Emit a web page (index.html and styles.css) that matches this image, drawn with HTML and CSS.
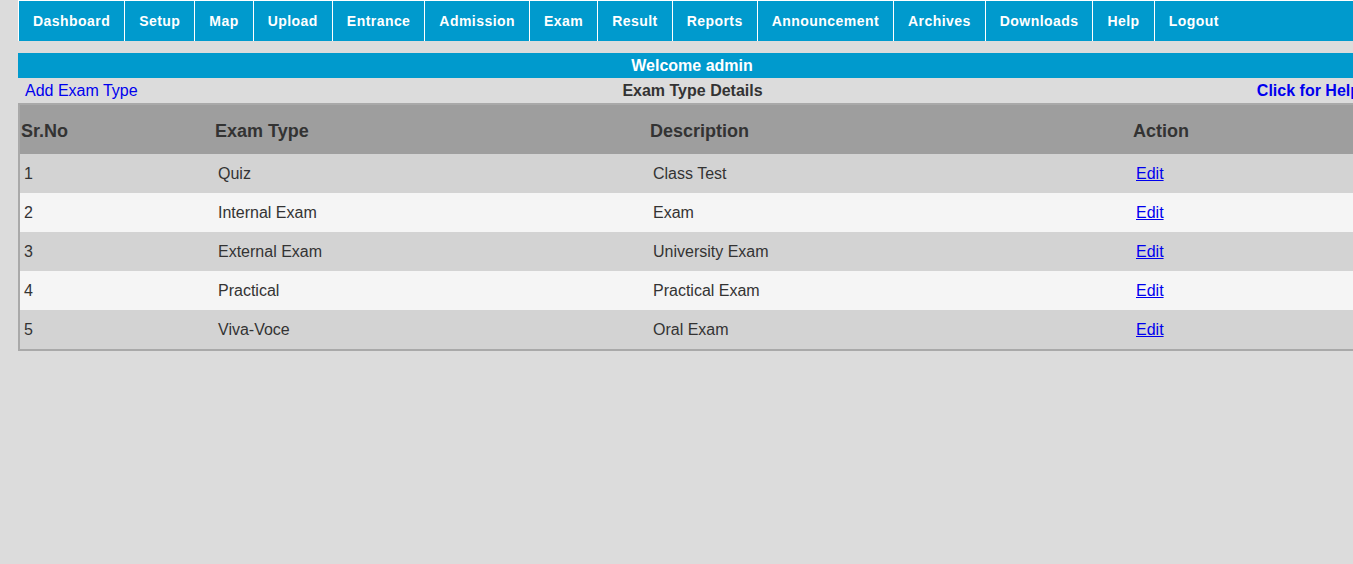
FILE: index.html
```html
<!DOCTYPE html>
<html>
<head>
<meta charset="utf-8">
<title>Exam Type Details</title>
<link rel="stylesheet" href="styles.css">
</head>
<body>
<div class="page">
  <ul class="nav">
    <li><a href="#">Dashboard</a></li>
    <li><a href="#">Setup</a></li>
    <li><a href="#">Map</a></li>
    <li><a href="#">Upload</a></li>
    <li><a href="#">Entrance</a></li>
    <li><a href="#">Admission</a></li>
    <li><a href="#">Exam</a></li>
    <li><a href="#">Result</a></li>
    <li><a href="#">Reports</a></li>
    <li><a href="#">Announcement</a></li>
    <li><a href="#">Archives</a></li>
    <li><a href="#">Downloads</a></li>
    <li><a href="#">Help</a></li>
    <li><a href="#">Logout</a></li>
  </ul>

  <div class="welcome">Welcome admin</div>

  <div class="subbar">
    <a class="add-link" href="#">Add Exam Type</a>
    <span class="title">Exam Type Details</span>
    <a class="help-link" href="#">Click for Help</a>
  </div>

  <div class="grid">
    <div class="row head">
      <div class="cell">Sr.No</div>
      <div class="cell">Exam Type</div>
      <div class="cell">Description</div>
      <div class="cell">Action</div>
    </div>
    <div class="row odd">
      <div class="cell">1</div>
      <div class="cell">Quiz</div>
      <div class="cell">Class Test</div>
      <div class="cell"><a href="#">Edit</a></div>
    </div>
    <div class="row even">
      <div class="cell">2</div>
      <div class="cell">Internal Exam</div>
      <div class="cell">Exam</div>
      <div class="cell"><a href="#">Edit</a></div>
    </div>
    <div class="row odd">
      <div class="cell">3</div>
      <div class="cell">External Exam</div>
      <div class="cell">University Exam</div>
      <div class="cell"><a href="#">Edit</a></div>
    </div>
    <div class="row even">
      <div class="cell">4</div>
      <div class="cell">Practical</div>
      <div class="cell">Practical Exam</div>
      <div class="cell"><a href="#">Edit</a></div>
    </div>
    <div class="row odd">
      <div class="cell">5</div>
      <div class="cell">Viva-Voce</div>
      <div class="cell">Oral Exam</div>
      <div class="cell"><a href="#">Edit</a></div>
    </div>
  </div>
</div>
</body>
</html>
```
FILE: styles.css
```css
html, body {
  margin: 0;
  padding: 0;
  background: #dcdcdc;
  overflow: hidden;
  font-family: "Liberation Sans", Arial, sans-serif;
  color: #333;
}

.page {
  width: 1348px;
  margin-left: 18px;
}

.nav {
  list-style: none;
  margin: 0;
  padding: 0;
  display: flex;
  background: #009acd;
  border-top: 1px solid #fff;
  height: 40px;
}

.nav li {
  border-left: 1px solid #fff;
}

.nav a {
  display: block;
  padding: 0 14px;
  line-height: 40px;
  font-size: 14px;
  letter-spacing: 0.45px;
  font-weight: bold;
  color: #fff;
  text-decoration: none;
  white-space: nowrap;
}

.welcome {
  margin-top: 12px;
  background: #009acd;
  color: #fff;
  font-weight: bold;
  font-size: 16px;
  height: 25px;
  line-height: 25px;
  text-align: center;
}

.subbar {
  display: grid;
  grid-template-columns: 1fr auto 1fr;
  align-items: center;
  height: 25px;
  padding: 0 6px 0 7px;
  font-size: 16px;
}

.add-link {
  color: #0000ee;
  text-decoration: none;
}

.title {
  font-weight: bold;
  color: #333;
}

.help-link {
  justify-self: end;
  color: #0000ee;
  font-weight: bold;
  text-decoration: none;
}

.grid {
  border: 2px solid #a9a9a9;
}

.row {
  display: grid;
  grid-template-columns: 194px 435px 483px 1fr;
  align-items: center;
}

.row.head {
  background: #9e9e9e;
  height: 49px;
  font-size: 18px;
  font-weight: bold;
  color: #333;
}

.row.head .cell {
  padding: 3px 0 0 1px;
}

.row.odd,
.row.even {
  height: 39px;
  font-size: 16px;
}

.row.odd {
  background: #d3d3d3;
}

.row.even {
  background: #f5f5f5;
}

.row.odd .cell,
.row.even .cell {
  padding: 1px 0 0 4px;
}

.row a {
  color: #0000ee;
  text-decoration: underline;
}
```
